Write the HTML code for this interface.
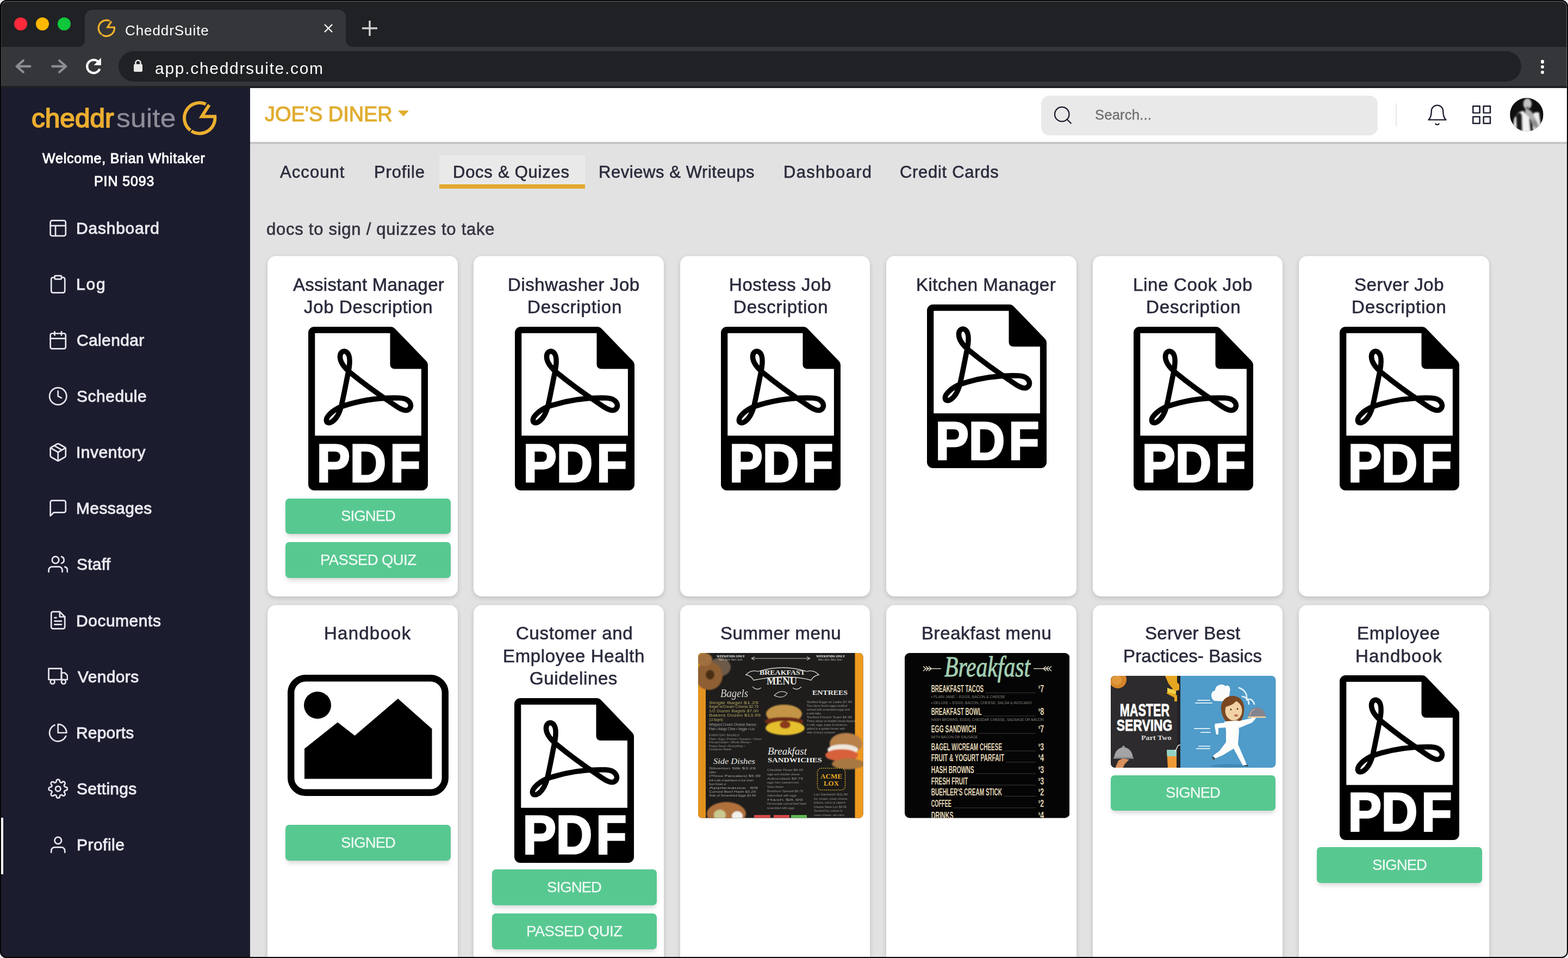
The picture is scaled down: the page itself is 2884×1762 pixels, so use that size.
<!DOCTYPE html>
<html lang="en"><head><meta charset="utf-8"><title>CheddrSuite</title>
<style>
*{margin:0;padding:0;box-sizing:border-box}
html,body{width:2884px;height:1762px;background:#ebebeb}
body{font-family:"Liberation Sans",sans-serif;position:relative}
#win{position:absolute;left:0;top:0;width:2884px;height:1762px;border-radius:12px;overflow:hidden;background:#e2e2e3}
#win div,#win svg,#win span{position:absolute;display:block}
.t{white-space:nowrap;will-change:transform}
#frame{position:absolute;left:0;top:0;width:2884px;height:1762px;border:2px solid #050505;border-radius:12px;pointer-events:none}
#hl{position:absolute;left:2px;top:2px;width:2880px;height:158px;border:1.6px solid rgba(255,255,255,0.34);border-bottom:none;border-left-color:rgba(255,255,255,0.12);border-radius:10px 10px 0 0;pointer-events:none}
</style></head>
<body><div id="win">
<main>
<div style="left:459.5px;top:162px;width:2425px;height:1600px;background:#e2e2e3"></div>
<section>
<article>
<div style="left:492px;top:471.3px;width:349.5px;height:625.5px;background:#fff;border-radius:15px;box-shadow:0 3px 9px rgba(0,0,0,0.16)"></div>
<span class="t" style="left:538.5px;top:503.9px;font-size:33px;line-height:40px;color:#2a2b3c;letter-spacing:0.28px;-webkit-text-stroke:0.6px #2a2b3c;">Assistant Manager</span>
<span class="t" style="left:558.7px;top:545.0px;font-size:33px;line-height:40px;color:#2a2b3c;letter-spacing:0.66px;-webkit-text-stroke:0.6px #2a2b3c;">Job Description</span>
<svg style="left:567.2px;top:600.9px" width="220" height="301" viewBox="0 0 220 301" preserveAspectRatio="none"><path d="M11,0 H152 Q156,0 159,3 L217,63 Q220,66 220,70 V290 a11,11 0 0 1 -11,11 H11 a11,11 0 0 1 -11,-11 V11 a11,11 0 0 1 11,-11 Z" fill="#000"/><path d="M12.3,11.8 H150.5 V69.5 a8,8 0 0 0 8,8 H207.9 V200.3 H12.3 Z" fill="#fff"/><path d="M60.5,147 C65,128 69,106 73.5,84 C76,72 78.5,55 72,48 C66,41.5 58,46 58.5,56 C59,66 67,76 78,85 C100,103 126,122 150,138 C164,148 178,158.5 185.5,151.5 C193,144 186,131.5 168,131 C135,130 98,134 60.5,147 C46,153 32,165 33.5,173 C35,181 52,177 60.5,147 Z" fill="none" stroke="#000" stroke-width="9.6" stroke-linejoin="round"/><text transform="scale(0.93,1)" x="16.6 82.6 161.5" y="284.6" font-family="Liberation Sans, sans-serif" font-weight="700" font-size="99" fill="#fff" stroke="#fff" stroke-width="3.2" stroke-linejoin="miter">PDF</text></svg>
<div style="left:525.4px;top:916.6px;width:303.4px;height:65.6px;background:#58c891;border-radius:7px;box-shadow:0 6px 9px -2px rgba(0,0,0,0.17)"></div>
<span class="t" style="left:626.7px;top:932.2px;font-size:27.5px;line-height:33px;color:#f0faf5;letter-spacing:-0.89px;-webkit-text-stroke:0.25px #f0faf5;">SIGNED</span>
<div style="left:525.4px;top:997.4px;width:303.4px;height:65.6px;background:#58c891;border-radius:7px;box-shadow:0 6px 9px -2px rgba(0,0,0,0.17)"></div>
<span class="t" style="left:588.7px;top:1013.0px;font-size:27.5px;line-height:33px;color:#f0faf5;letter-spacing:-0.59px;-webkit-text-stroke:0.25px #f0faf5;">PASSED QUIZ</span>
</article>
<article>
<div style="left:871.4px;top:471.3px;width:349.5px;height:625.5px;background:#fff;border-radius:15px;box-shadow:0 3px 9px rgba(0,0,0,0.16)"></div>
<span class="t" style="left:934.3px;top:503.9px;font-size:33px;line-height:40px;color:#2a2b3c;letter-spacing:0.57px;-webkit-text-stroke:0.6px #2a2b3c;">Dishwasher Job</span>
<span class="t" style="left:969.5px;top:545.0px;font-size:33px;line-height:40px;color:#2a2b3c;letter-spacing:0.83px;-webkit-text-stroke:0.6px #2a2b3c;">Description</span>
<svg style="left:946.6px;top:600.9px" width="220" height="301" viewBox="0 0 220 301" preserveAspectRatio="none"><path d="M11,0 H152 Q156,0 159,3 L217,63 Q220,66 220,70 V290 a11,11 0 0 1 -11,11 H11 a11,11 0 0 1 -11,-11 V11 a11,11 0 0 1 11,-11 Z" fill="#000"/><path d="M12.3,11.8 H150.5 V69.5 a8,8 0 0 0 8,8 H207.9 V200.3 H12.3 Z" fill="#fff"/><path d="M60.5,147 C65,128 69,106 73.5,84 C76,72 78.5,55 72,48 C66,41.5 58,46 58.5,56 C59,66 67,76 78,85 C100,103 126,122 150,138 C164,148 178,158.5 185.5,151.5 C193,144 186,131.5 168,131 C135,130 98,134 60.5,147 C46,153 32,165 33.5,173 C35,181 52,177 60.5,147 Z" fill="none" stroke="#000" stroke-width="9.6" stroke-linejoin="round"/><text transform="scale(0.93,1)" x="16.6 82.6 161.5" y="284.6" font-family="Liberation Sans, sans-serif" font-weight="700" font-size="99" fill="#fff" stroke="#fff" stroke-width="3.2" stroke-linejoin="miter">PDF</text></svg>
</article>
<article>
<div style="left:1250.8px;top:471.3px;width:349.5px;height:625.5px;background:#fff;border-radius:15px;box-shadow:0 3px 9px rgba(0,0,0,0.16)"></div>
<span class="t" style="left:1340.9px;top:503.9px;font-size:33px;line-height:40px;color:#2a2b3c;letter-spacing:0.59px;-webkit-text-stroke:0.6px #2a2b3c;">Hostess Job</span>
<span class="t" style="left:1348.5px;top:545.0px;font-size:33px;line-height:40px;color:#2a2b3c;letter-spacing:0.86px;-webkit-text-stroke:0.6px #2a2b3c;">Description</span>
<svg style="left:1326px;top:600.9px" width="220" height="301" viewBox="0 0 220 301" preserveAspectRatio="none"><path d="M11,0 H152 Q156,0 159,3 L217,63 Q220,66 220,70 V290 a11,11 0 0 1 -11,11 H11 a11,11 0 0 1 -11,-11 V11 a11,11 0 0 1 11,-11 Z" fill="#000"/><path d="M12.3,11.8 H150.5 V69.5 a8,8 0 0 0 8,8 H207.9 V200.3 H12.3 Z" fill="#fff"/><path d="M60.5,147 C65,128 69,106 73.5,84 C76,72 78.5,55 72,48 C66,41.5 58,46 58.5,56 C59,66 67,76 78,85 C100,103 126,122 150,138 C164,148 178,158.5 185.5,151.5 C193,144 186,131.5 168,131 C135,130 98,134 60.5,147 C46,153 32,165 33.5,173 C35,181 52,177 60.5,147 Z" fill="none" stroke="#000" stroke-width="9.6" stroke-linejoin="round"/><text transform="scale(0.93,1)" x="16.6 82.6 161.5" y="284.6" font-family="Liberation Sans, sans-serif" font-weight="700" font-size="99" fill="#fff" stroke="#fff" stroke-width="3.2" stroke-linejoin="miter">PDF</text></svg>
</article>
<article>
<div style="left:1630.2px;top:471.3px;width:349.5px;height:625.5px;background:#fff;border-radius:15px;box-shadow:0 3px 9px rgba(0,0,0,0.16)"></div>
<span class="t" style="left:1685.3px;top:503.9px;font-size:33px;line-height:40px;color:#2a2b3c;letter-spacing:0.51px;-webkit-text-stroke:0.6px #2a2b3c;">Kitchen Manager</span>
<svg style="left:1705.4px;top:559.8px" width="220" height="301" viewBox="0 0 220 301" preserveAspectRatio="none"><path d="M11,0 H152 Q156,0 159,3 L217,63 Q220,66 220,70 V290 a11,11 0 0 1 -11,11 H11 a11,11 0 0 1 -11,-11 V11 a11,11 0 0 1 11,-11 Z" fill="#000"/><path d="M12.3,11.8 H150.5 V69.5 a8,8 0 0 0 8,8 H207.9 V200.3 H12.3 Z" fill="#fff"/><path d="M60.5,147 C65,128 69,106 73.5,84 C76,72 78.5,55 72,48 C66,41.5 58,46 58.5,56 C59,66 67,76 78,85 C100,103 126,122 150,138 C164,148 178,158.5 185.5,151.5 C193,144 186,131.5 168,131 C135,130 98,134 60.5,147 C46,153 32,165 33.5,173 C35,181 52,177 60.5,147 Z" fill="none" stroke="#000" stroke-width="9.6" stroke-linejoin="round"/><text transform="scale(0.93,1)" x="16.6 82.6 161.5" y="284.6" font-family="Liberation Sans, sans-serif" font-weight="700" font-size="99" fill="#fff" stroke="#fff" stroke-width="3.2" stroke-linejoin="miter">PDF</text></svg>
</article>
<article>
<div style="left:2009.6px;top:471.3px;width:349.5px;height:625.5px;background:#fff;border-radius:15px;box-shadow:0 3px 9px rgba(0,0,0,0.16)"></div>
<span class="t" style="left:2083.6px;top:503.9px;font-size:33px;line-height:40px;color:#2a2b3c;letter-spacing:0.70px;-webkit-text-stroke:0.6px #2a2b3c;">Line Cook Job</span>
<span class="t" style="left:2107.5px;top:545.0px;font-size:33px;line-height:40px;color:#2a2b3c;letter-spacing:0.85px;-webkit-text-stroke:0.6px #2a2b3c;">Description</span>
<svg style="left:2084.8px;top:600.9px" width="220" height="301" viewBox="0 0 220 301" preserveAspectRatio="none"><path d="M11,0 H152 Q156,0 159,3 L217,63 Q220,66 220,70 V290 a11,11 0 0 1 -11,11 H11 a11,11 0 0 1 -11,-11 V11 a11,11 0 0 1 11,-11 Z" fill="#000"/><path d="M12.3,11.8 H150.5 V69.5 a8,8 0 0 0 8,8 H207.9 V200.3 H12.3 Z" fill="#fff"/><path d="M60.5,147 C65,128 69,106 73.5,84 C76,72 78.5,55 72,48 C66,41.5 58,46 58.5,56 C59,66 67,76 78,85 C100,103 126,122 150,138 C164,148 178,158.5 185.5,151.5 C193,144 186,131.5 168,131 C135,130 98,134 60.5,147 C46,153 32,165 33.5,173 C35,181 52,177 60.5,147 Z" fill="none" stroke="#000" stroke-width="9.6" stroke-linejoin="round"/><text transform="scale(0.93,1)" x="16.6 82.6 161.5" y="284.6" font-family="Liberation Sans, sans-serif" font-weight="700" font-size="99" fill="#fff" stroke="#fff" stroke-width="3.2" stroke-linejoin="miter">PDF</text></svg>
</article>
<article>
<div style="left:2389px;top:471.3px;width:349.5px;height:625.5px;background:#fff;border-radius:15px;box-shadow:0 3px 9px rgba(0,0,0,0.16)"></div>
<span class="t" style="left:2490.6px;top:503.9px;font-size:33px;line-height:40px;color:#2a2b3c;letter-spacing:0.56px;-webkit-text-stroke:0.6px #2a2b3c;">Server Job</span>
<span class="t" style="left:2486.1px;top:545.0px;font-size:33px;line-height:40px;color:#2a2b3c;letter-spacing:0.88px;-webkit-text-stroke:0.6px #2a2b3c;">Description</span>
<svg style="left:2464.2px;top:600.9px" width="220" height="301" viewBox="0 0 220 301" preserveAspectRatio="none"><path d="M11,0 H152 Q156,0 159,3 L217,63 Q220,66 220,70 V290 a11,11 0 0 1 -11,11 H11 a11,11 0 0 1 -11,-11 V11 a11,11 0 0 1 11,-11 Z" fill="#000"/><path d="M12.3,11.8 H150.5 V69.5 a8,8 0 0 0 8,8 H207.9 V200.3 H12.3 Z" fill="#fff"/><path d="M60.5,147 C65,128 69,106 73.5,84 C76,72 78.5,55 72,48 C66,41.5 58,46 58.5,56 C59,66 67,76 78,85 C100,103 126,122 150,138 C164,148 178,158.5 185.5,151.5 C193,144 186,131.5 168,131 C135,130 98,134 60.5,147 C46,153 32,165 33.5,173 C35,181 52,177 60.5,147 Z" fill="none" stroke="#000" stroke-width="9.6" stroke-linejoin="round"/><text transform="scale(0.93,1)" x="16.6 82.6 161.5" y="284.6" font-family="Liberation Sans, sans-serif" font-weight="700" font-size="99" fill="#fff" stroke="#fff" stroke-width="3.2" stroke-linejoin="miter">PDF</text></svg>
</article>
<article>
<div style="left:492px;top:1112.8px;width:349.5px;height:680px;background:#fff;border-radius:15px;box-shadow:0 3px 9px rgba(0,0,0,0.16)"></div>
<span class="t" style="left:595.8px;top:1145.4px;font-size:33px;line-height:40px;color:#2a2b3c;letter-spacing:1.24px;-webkit-text-stroke:0.6px #2a2b3c;">Handbook</span>
<svg style="left:529.2px;top:1241.4px;" width="296" height="223" viewBox="0 0 296 223"><rect x="6.2" y="6.2" width="283.6" height="210.6" rx="27" ry="27" fill="#fff" stroke="#000" stroke-width="12.4"/><circle cx="55" cy="56" r="25" fill="#000"/><polygon points="31,136 92,87.5 123.5,112 203,44 265.5,99.5 265.5,191.5 31,191.5" fill="#000"/></svg>
<div style="left:525.4px;top:1517px;width:303.4px;height:65.6px;background:#58c891;border-radius:7px;box-shadow:0 6px 9px -2px rgba(0,0,0,0.17)"></div>
<span class="t" style="left:626.7px;top:1532.6px;font-size:27.5px;line-height:33px;color:#f0faf5;letter-spacing:-0.89px;-webkit-text-stroke:0.25px #f0faf5;">SIGNED</span>
</article>
<article>
<div style="left:871.4px;top:1112.8px;width:349.5px;height:680px;background:#fff;border-radius:15px;box-shadow:0 3px 9px rgba(0,0,0,0.16)"></div>
<span class="t" style="left:948.9px;top:1145.4px;font-size:33px;line-height:40px;color:#2a2b3c;letter-spacing:0.66px;-webkit-text-stroke:0.6px #2a2b3c;">Customer and</span>
<span class="t" style="left:925.3px;top:1186.5px;font-size:33px;line-height:40px;color:#2a2b3c;letter-spacing:0.65px;-webkit-text-stroke:0.6px #2a2b3c;">Employee Health</span>
<span class="t" style="left:974.4px;top:1227.6px;font-size:33px;line-height:40px;color:#2a2b3c;letter-spacing:0.60px;-webkit-text-stroke:0.6px #2a2b3c;">Guidelines</span>
<svg style="left:946.2px;top:1283.5px" width="220" height="303" viewBox="0 0 220 301" preserveAspectRatio="none"><path d="M11,0 H152 Q156,0 159,3 L217,63 Q220,66 220,70 V290 a11,11 0 0 1 -11,11 H11 a11,11 0 0 1 -11,-11 V11 a11,11 0 0 1 11,-11 Z" fill="#000"/><path d="M12.3,11.8 H150.5 V69.5 a8,8 0 0 0 8,8 H207.9 V200.3 H12.3 Z" fill="#fff"/><path d="M60.5,147 C65,128 69,106 73.5,84 C76,72 78.5,55 72,48 C66,41.5 58,46 58.5,56 C59,66 67,76 78,85 C100,103 126,122 150,138 C164,148 178,158.5 185.5,151.5 C193,144 186,131.5 168,131 C135,130 98,134 60.5,147 C46,153 32,165 33.5,173 C35,181 52,177 60.5,147 Z" fill="none" stroke="#000" stroke-width="9.6" stroke-linejoin="round"/><text transform="scale(0.93,1)" x="16.6 82.6 161.5" y="284.6" font-family="Liberation Sans, sans-serif" font-weight="700" font-size="99" fill="#fff" stroke="#fff" stroke-width="3.2" stroke-linejoin="miter">PDF</text></svg>
<div style="left:904.8px;top:1599.2px;width:303.4px;height:65.6px;background:#58c891;border-radius:7px;box-shadow:0 6px 9px -2px rgba(0,0,0,0.17)"></div>
<span class="t" style="left:1006.1px;top:1614.8px;font-size:27.5px;line-height:33px;color:#f0faf5;letter-spacing:-0.89px;-webkit-text-stroke:0.25px #f0faf5;">SIGNED</span>
<div style="left:904.8px;top:1680px;width:303.4px;height:65.6px;background:#58c891;border-radius:7px;box-shadow:0 6px 9px -2px rgba(0,0,0,0.17)"></div>
<span class="t" style="left:968.1px;top:1695.6px;font-size:27.5px;line-height:33px;color:#f0faf5;letter-spacing:-0.59px;-webkit-text-stroke:0.25px #f0faf5;">PASSED QUIZ</span>
</article>
<article>
<div style="left:1250.8px;top:1112.8px;width:349.5px;height:680px;background:#fff;border-radius:15px;box-shadow:0 3px 9px rgba(0,0,0,0.16)"></div>
<span class="t" style="left:1324.7px;top:1145.4px;font-size:33px;line-height:40px;color:#2a2b3c;letter-spacing:0.53px;-webkit-text-stroke:0.6px #2a2b3c;">Summer menu</span>
<svg style="left:1284.25px;top:1201.4px;" width="303.5" height="303.5" viewBox="0 0 303.5 303.5"><defs><clipPath id="cs"><rect width="303.5" height="303.5" rx="7"/></clipPath></defs><g clip-path="url(#cs)"><defs><filter id="sumf" x="-10%" y="-10%" width="120%" height="120%"><feGaussianBlur stdDeviation="1.1"/></filter></defs><rect width="304" height="304" fill="#1e1d1c"/><rect x="0" y="0" width="14" height="304" fill="#e3921f"/><rect x="288.5" y="0" width="15.5" height="304" fill="#ee991f"/><g filter="url(#sumf)"><ellipse cx="40" cy="26" rx="20" ry="17" fill="#6e5a48"/><ellipse cx="20" cy="42" rx="25" ry="26" fill="#8e5e30"/><ellipse cx="22" cy="40" rx="8" ry="9" fill="#4a2e18"/><ellipse cx="12" cy="12" rx="14" ry="12" fill="#a07040"/><ellipse cx="158" cy="112" rx="33" ry="17" fill="#c49446"/><ellipse cx="158" cy="126" rx="36" ry="8" fill="#6e2a18"/><ellipse cx="160" cy="138" rx="36" ry="13" fill="#e6bf2e"/><ellipse cx="160" cy="132" rx="10" ry="7" fill="#8a3a1c"/><ellipse cx="272" cy="167" rx="30" ry="20" fill="#b8814a"/><ellipse cx="266" cy="178" rx="28" ry="10" fill="#efe6dc"/><ellipse cx="264" cy="188" rx="30" ry="11" fill="#d8603a"/><ellipse cx="276" cy="204" rx="30" ry="10" fill="#a87842"/><ellipse cx="52" cy="296" rx="36" ry="22" fill="#b0703a"/><ellipse cx="40" cy="298" rx="11" ry="10" fill="#c8c890"/><ellipse cx="72" cy="300" rx="10" ry="9" fill="#f2f0ea"/></g><rect x="103" y="298" width="30" height="6" fill="#d44a4a"/><rect x="139" y="298" width="29" height="6" fill="#d44a4a"/><rect x="171" y="298" width="29" height="6" fill="#5fb854"/><path d="M88,40 q10,-10 22,-6 q46,-14 90,0 q12,-4 22,6 q-10,2 -14,10 q-44,-12 -106,0 q-4,-8 -14,-10 Z" fill="none" stroke="#d8d8d4" stroke-width="1.3"/><path d="M100,62 q8,8 16,2 M190,62 q-8,8 -16,2 M140,78 q12,-12 24,-4 q-8,12 -24,4 Z" fill="none" stroke="#cfcfcb" stroke-width="1.2"/><path d="M98,10 H206 M98,10 l6,-3 M98,10 l6,3 M206,10 l-6,-3 M206,10 l-6,3" stroke="#bdbdb8" stroke-width="1.2" fill="none"/><rect x="219.5" y="212" width="51" height="40" rx="7" fill="#1a1a18" stroke="#c9a030" stroke-width="1.6" stroke-dasharray="2 1.6"/><g font-family="Liberation Serif, serif" fill="#ecece8" font-weight="700"><text x="113" y="40" font-size="13" textLength="84" lengthAdjust="spacingAndGlyphs">BREAKFAST</text><text x="126" y="58" font-size="18" textLength="56" lengthAdjust="spacingAndGlyphs">MENU</text><text x="210" y="77" font-size="12.5" textLength="65" lengthAdjust="spacingAndGlyphs">ENTREES</text><text x="41" y="81" font-size="20" font-style="italic" font-weight="400" textLength="51" lengthAdjust="spacingAndGlyphs" opacity="0.9">Bagels</text><text x="128" y="187" font-size="19" font-style="italic" font-weight="400" textLength="72" lengthAdjust="spacingAndGlyphs">Breakfast</text><text x="128" y="200.5" font-size="12" textLength="100" lengthAdjust="spacingAndGlyphs">SANDWICHES</text><text x="28" y="204" font-size="15" font-style="italic" font-weight="400" textLength="77" lengthAdjust="spacingAndGlyphs">Side Dishes</text><text x="225" y="231" font-size="11.5" fill="#e6ad24" textLength="40" lengthAdjust="spacingAndGlyphs">ACME</text><text x="231" y="244" font-size="11.5" fill="#e6ad24" textLength="28" lengthAdjust="spacingAndGlyphs">LOX</text><text x="34" y="8" font-size="6" textLength="52" lengthAdjust="spacingAndGlyphs">WEEKENDS ONLY</text><text x="217" y="8" font-size="6" textLength="53" lengthAdjust="spacingAndGlyphs">WEEKENDS ONLY</text></g><g xml:space="preserve" font-family="Liberation Sans, sans-serif" font-size="4.6" font-weight="400" fill="#cfcfca" opacity="0.8"><text x="38" y="13.5" textLength="44" lengthAdjust="spacingAndGlyphs">8am-2pm  9am-1pm</text></g><g xml:space="preserve" font-family="Liberation Sans, sans-serif" font-size="4.6" font-weight="400" fill="#cfcfca" opacity="0.8"><text x="221" y="13.5" textLength="44" lengthAdjust="spacingAndGlyphs">8am-2pm  9am-1pm</text></g><g xml:space="preserve" font-family="Liberation Sans, sans-serif" font-size="6.4" font-weight="400" fill="#d9c96e" opacity="0.78"><text x="20" y="93.5" textLength="91" lengthAdjust="spacingAndGlyphs">Single Bagel               $1.25</text><text x="20" y="101.3" textLength="91" lengthAdjust="spacingAndGlyphs">Bagel w/Cream Cheese  $2.75</text><text x="20" y="109.1" textLength="91" lengthAdjust="spacingAndGlyphs">1/2 Dozen Bagels        $7.00</text><text x="20" y="116.9" textLength="95" lengthAdjust="spacingAndGlyphs">Bakers Dozen              $13.99</text><text x="20" y="124.7" textLength="26" lengthAdjust="spacingAndGlyphs">(13 Bagels)</text></g><g xml:space="preserve" font-family="Liberation Sans, sans-serif" font-size="6.4" font-weight="400" fill="#d8d8d4" opacity="0.7"><text x="20" y="133.5" textLength="88" lengthAdjust="spacingAndGlyphs">Whipped Cream Cheese flavors:</text><text x="20" y="141.7" textLength="84" lengthAdjust="spacingAndGlyphs">Plain • Asiago Chive • Veggie • Lox</text></g><g xml:space="preserve" font-family="Liberation Sans, sans-serif" font-size="6.2" font-weight="400" fill="#cfcfca" opacity="0.62"><text x="20" y="153" textLength="56" lengthAdjust="spacingAndGlyphs">EVERYDAY BAGELS</text><text x="20" y="159.5" textLength="97" lengthAdjust="spacingAndGlyphs">Plain • Egg • Pretzel • Sesame • Onion</text><text x="20" y="166" textLength="78" lengthAdjust="spacingAndGlyphs">Pumpernickel • Whole Wheat •</text><text x="20" y="172.5" textLength="66" lengthAdjust="spacingAndGlyphs">Poppy Seed • Everything •</text><text x="20" y="179" textLength="42" lengthAdjust="spacingAndGlyphs">Cinnamon Raisin</text></g><g xml:space="preserve" font-family="Liberation Sans, sans-serif" font-size="6.2" font-weight="400" fill="#d4d4d0" opacity="0.62"><text x="200" y="91.5" textLength="83" lengthAdjust="spacingAndGlyphs">Stuffed Eggs w/ Latke    $7.99</text><text x="200" y="98.5" textLength="74" lengthAdjust="spacingAndGlyphs">Two farm fresh eggs stuffed</text><text x="200" y="105.5" textLength="79" lengthAdjust="spacingAndGlyphs">served with scrambled eggs and</text><text x="200" y="112.5" textLength="26" lengthAdjust="spacingAndGlyphs">a side latke</text><text x="200" y="119.5" textLength="83" lengthAdjust="spacingAndGlyphs">Stuffed French Toast     $6.99</text><text x="200" y="126.5" textLength="89" lengthAdjust="spacingAndGlyphs">Three slices of challah bread dipped</text><text x="200" y="133.5" textLength="75" lengthAdjust="spacingAndGlyphs">in milk, eggs, sugar &amp; cinnamon,</text><text x="200" y="140.5" textLength="70" lengthAdjust="spacingAndGlyphs">grilled to a golden brown with</text><text x="200" y="147.5" textLength="52" lengthAdjust="spacingAndGlyphs">side of berry compote</text></g><g xml:space="preserve" font-family="Liberation Sans, sans-serif" font-size="6.2" font-weight="400" fill="#d8d8d4" opacity="0.7"><text x="20" y="214" textLength="86" lengthAdjust="spacingAndGlyphs">Silverton Silk            $3.29</text><text x="20" y="221.2" textLength="13" lengthAdjust="spacingAndGlyphs">Latkes</text><text x="20" y="228.4" textLength="95" lengthAdjust="spacingAndGlyphs">(Three Pancakes)      $5.99</text><text x="20" y="235.6" textLength="82" lengthAdjust="spacingAndGlyphs">with a side of applesauce or sour cream</text><text x="20" y="242.8" textLength="32" lengthAdjust="spacingAndGlyphs">Sour Cream or</text><text x="20" y="250" textLength="90" lengthAdjust="spacingAndGlyphs">Applesauce                 .69</text><text x="20" y="257.2" textLength="86" lengthAdjust="spacingAndGlyphs">Corned Beef Hash     $3.29</text><text x="20" y="264.4" textLength="86" lengthAdjust="spacingAndGlyphs">Side of Scrambled Eggs $3.99</text></g><g xml:space="preserve" font-family="Liberation Sans, sans-serif" font-size="6.2" font-weight="400" fill="#d4d4d0" opacity="0.62"><text x="127" y="217" textLength="66" lengthAdjust="spacingAndGlyphs">Cheddar Head       $8.49</text><text x="127" y="224.8" textLength="60" lengthAdjust="spacingAndGlyphs">eggs and cheddar cheese</text><text x="127" y="232.6" textLength="66" lengthAdjust="spacingAndGlyphs">Adirondack           $8.79</text><text x="127" y="240.4" textLength="58" lengthAdjust="spacingAndGlyphs">eggs, ham, pastrami and</text><text x="127" y="248.2" textLength="30" lengthAdjust="spacingAndGlyphs">Swiss cheese</text><text x="127" y="256" textLength="66" lengthAdjust="spacingAndGlyphs">Buckhorn Special    $9.79</text><text x="127" y="263.8" textLength="54" lengthAdjust="spacingAndGlyphs">Adirondack with eggs</text><text x="127" y="271.6" textLength="66" lengthAdjust="spacingAndGlyphs">Hash                    $8.99</text><text x="127" y="279.4" textLength="72" lengthAdjust="spacingAndGlyphs">Homemade corned beef hash</text><text x="127" y="287.2" textLength="50" lengthAdjust="spacingAndGlyphs">scrambled with eggs</text></g><g xml:space="preserve" font-family="Liberation Sans, sans-serif" font-size="6.2" font-weight="400" fill="#d4d4d0" opacity="0.62"><text x="213" y="262" textLength="62" lengthAdjust="spacingAndGlyphs">Lox Sandwich   $11.99</text><text x="213" y="269.6" textLength="63" lengthAdjust="spacingAndGlyphs">lox, tomato, cream cheese,</text><text x="213" y="277.2" textLength="58" lengthAdjust="spacingAndGlyphs">lettuce, onion &amp; capers</text><text x="213" y="284.8" textLength="60" lengthAdjust="spacingAndGlyphs">Classic Meat Lox  $9.99</text><text x="213" y="292.4" textLength="52" lengthAdjust="spacingAndGlyphs">Smoked lox, onions &amp;</text><text x="213" y="300" textLength="56" lengthAdjust="spacingAndGlyphs">cream cheese, red onion</text></g></g></svg>
</article>
<article>
<div style="left:1630.2px;top:1112.8px;width:349.5px;height:680px;background:#fff;border-radius:15px;box-shadow:0 3px 9px rgba(0,0,0,0.16)"></div>
<span class="t" style="left:1695.3px;top:1145.4px;font-size:33px;line-height:40px;color:#2a2b3c;letter-spacing:0.60px;-webkit-text-stroke:0.6px #2a2b3c;">Breakfast menu</span>
<svg style="left:1663.65px;top:1201.4px;" width="303.5" height="303.5" viewBox="0 0 303.5 303.5"><defs><clipPath id="cb"><rect width="303.5" height="303.5" rx="9"/></clipPath></defs><g clip-path="url(#cb)"><rect width="304" height="304" fill="#050505"/><text x="73" y="43" font-family="Liberation Serif, serif" font-style="italic" font-weight="400" font-size="52" fill="#a3cfb3" stroke="#a3cfb3" stroke-width="0.9" textLength="158" lengthAdjust="spacingAndGlyphs">Breakfast</text><path d="M40,28.8 H67 M237,28.8 H264 M34,24.5 l5,4.3 l-5,4.3 M39,24.5 l5,4.3 l-5,4.3 M44,24.5 l5,4.3 l-5,4.3 M270,24.5 l-5,4.3 l5,4.3 M265,24.5 l-5,4.3 l5,4.3 M260,24.5 l-5,4.3 l5,4.3" stroke="#d6d0be" stroke-width="1.6" fill="none"/><g font-family="Liberation Sans, sans-serif" font-weight="700" font-size="17.6" fill="#e2d6b6"><text x="48.7" y="71.7" textLength="96.4" lengthAdjust="spacingAndGlyphs">BREAKFAST TACOS</text><text x="246" y="71.7" font-size="17.6" textLength="10" lengthAdjust="spacingAndGlyphs"><tspan font-size="8" dy="-7">$</tspan><tspan dy="7">7</tspan></text><rect x="148.1" y="72.7" width="92.9" height="1" fill="#3c3c3c"/><text x="48.7" y="114.4" textLength="92.7" lengthAdjust="spacingAndGlyphs">BREAKFAST BOWL</text><text x="246" y="114.4" font-size="17.6" textLength="10" lengthAdjust="spacingAndGlyphs"><tspan font-size="8" dy="-7">$</tspan><tspan dy="7">8</tspan></text><rect x="144.4" y="115.4" width="96.6" height="1" fill="#3c3c3c"/><text x="48.7" y="146.4" textLength="82.7" lengthAdjust="spacingAndGlyphs">EGG SANDWICH</text><text x="246" y="146.4" font-size="17.6" textLength="10" lengthAdjust="spacingAndGlyphs"><tspan font-size="8" dy="-7">$</tspan><tspan dy="7">7</tspan></text><rect x="134.4" y="147.4" width="106.6" height="1" fill="#3c3c3c"/><text x="48.7" y="178.7" textLength="130.4" lengthAdjust="spacingAndGlyphs">BAGEL W/CREAM CHEESE</text><text x="246" y="178.7" font-size="17.6" textLength="10" lengthAdjust="spacingAndGlyphs"><tspan font-size="8" dy="-7">$</tspan><tspan dy="7">3</tspan></text><rect x="182.1" y="179.7" width="58.9" height="1" fill="#3c3c3c"/><text x="48.7" y="199.3" textLength="134.3" lengthAdjust="spacingAndGlyphs">FRUIT &amp; YOGURT PARFAIT</text><text x="246" y="199.3" font-size="17.6" textLength="10" lengthAdjust="spacingAndGlyphs"><tspan font-size="8" dy="-7">$</tspan><tspan dy="7">4</tspan></text><rect x="186" y="200.3" width="55" height="1" fill="#3c3c3c"/><text x="48.7" y="220.5" textLength="79" lengthAdjust="spacingAndGlyphs">HASH BROWNS</text><text x="246" y="220.5" font-size="17.6" textLength="10" lengthAdjust="spacingAndGlyphs"><tspan font-size="8" dy="-7">$</tspan><tspan dy="7">3</tspan></text><rect x="130.7" y="221.5" width="110.3" height="1" fill="#3c3c3c"/><text x="48.7" y="241.5" textLength="67.6" lengthAdjust="spacingAndGlyphs">FRESH FRUIT</text><text x="246" y="241.5" font-size="17.6" textLength="10" lengthAdjust="spacingAndGlyphs"><tspan font-size="8" dy="-7">$</tspan><tspan dy="7">3</tspan></text><rect x="119.3" y="242.5" width="121.7" height="1" fill="#3c3c3c"/><text x="48.7" y="262" textLength="130.4" lengthAdjust="spacingAndGlyphs">BUEHLER&#x27;S CREAM STICK</text><text x="246" y="262" font-size="17.6" textLength="10" lengthAdjust="spacingAndGlyphs"><tspan font-size="8" dy="-7">$</tspan><tspan dy="7">2</tspan></text><rect x="182.1" y="263" width="58.9" height="1" fill="#3c3c3c"/><text x="48.7" y="283.3" textLength="37.3" lengthAdjust="spacingAndGlyphs">COFFEE</text><text x="246" y="283.3" font-size="17.6" textLength="10" lengthAdjust="spacingAndGlyphs"><tspan font-size="8" dy="-7">$</tspan><tspan dy="7">2</tspan></text><rect x="89" y="284.3" width="152" height="1" fill="#3c3c3c"/><text x="48.7" y="304.5" textLength="41" lengthAdjust="spacingAndGlyphs">DRINKS</text><text x="246" y="304.5" font-size="17.6" textLength="10" lengthAdjust="spacingAndGlyphs"><tspan font-size="8" dy="-7">$</tspan><tspan dy="7">4</tspan></text><rect x="92.7" y="305.5" width="148.3" height="1" fill="#3c3c3c"/></g><g xml:space="preserve" font-family="Liberation Sans, sans-serif" font-size="7.6" font-weight="400" fill="#9a978e" opacity="0.9"><text x="48.7" y="82.8" textLength="136" lengthAdjust="spacingAndGlyphs">• PLAIN JANE – EGGS, BACON &amp; CHEESE</text></g><g xml:space="preserve" font-family="Liberation Sans, sans-serif" font-size="7.6" font-weight="400" fill="#9a978e" opacity="0.9"><text x="48.7" y="93.6" textLength="185" lengthAdjust="spacingAndGlyphs">• DELUXE – EGGS, BACON, CHEESE, SALSA &amp; AVOCADO</text></g><g xml:space="preserve" font-family="Liberation Sans, sans-serif" font-size="7.6" font-weight="400" fill="#9a978e" opacity="0.9"><text x="48.7" y="125" textLength="207" lengthAdjust="spacingAndGlyphs">HASH BROWNS, EGGS, CHEDDAR CHEESE, SAUSAGE OR BACON</text></g><g xml:space="preserve" font-family="Liberation Sans, sans-serif" font-size="7.6" font-weight="400" fill="#9a978e" opacity="0.9"><text x="48.7" y="157" textLength="86" lengthAdjust="spacingAndGlyphs">WITH BACON OR SAUSAGE</text></g></g></svg>
</article>
<article>
<div style="left:2009.6px;top:1112.8px;width:349.5px;height:680px;background:#fff;border-radius:15px;box-shadow:0 3px 9px rgba(0,0,0,0.16)"></div>
<span class="t" style="left:2106.0px;top:1145.4px;font-size:33px;line-height:40px;color:#2a2b3c;letter-spacing:0.28px;-webkit-text-stroke:0.6px #2a2b3c;">Server Best</span>
<span class="t" style="left:2065.9px;top:1186.5px;font-size:33px;line-height:40px;color:#2a2b3c;letter-spacing:0.12px;-webkit-text-stroke:0.6px #2a2b3c;">Practices- Basics</span>
<svg style="left:2043.05px;top:1242.5px;" width="303.5" height="169" viewBox="0 0 303.5 169"><defs><clipPath id="cm"><rect width="303.5" height="169" rx="8"/></clipPath></defs><g clip-path="url(#cm)"><defs><filter id="cmf" x="-5%" y="-5%" width="110%" height="110%"><feGaussianBlur stdDeviation="0.7"/></filter></defs><rect width="304" height="170" fill="#4f9bc9"/><rect width="128" height="170" fill="#2d2b2d"/><rect x="122" width="6" height="170" fill="#232224"/><g filter="url(#cmf)"><circle cx="13" cy="7" r="16" fill="#d6852c"/><circle cx="11" cy="8" r="9" fill="#e09a3c"/><path d="M100,0 H122 V12 L126,16 V26 L112,30 L122,36 V47 H117 V40 L102,32 L114,24 L106,14 Z" fill="#e6a624"/><path d="M104,22 L120,28 V34 L104,30 Z" fill="#f2d24a"/><path d="M6.5,150.5 a17,19 0 0 1 34,0 Z" fill="#a4a4a6"/><rect x="5" y="149.5" width="37" height="3" fill="#8a8a8c"/><circle cx="23.5" cy="130.5" r="2" fill="#a4a4a6"/><path d="M8,170 L14,156 L22,152 L34,154 L26,162 L22,170 Z" fill="#d8905c"/><path d="M103,136 H121 V170 H105 Z" fill="#f09a34"/><path d="M103,136 H121 V148 H103.6 Z" fill="#93d2c4"/><path d="M118,140 L124,128 L128,127" stroke="#e8e8e8" stroke-width="1.6" fill="none"/><ellipse cx="220" cy="165.5" rx="35" ry="3" fill="#3f88b6"/><path d="M190,46 C182,40 184,28 192,27 C192,16 206,13 211,19 C217,15 221,22 219,30 C219,38 214,44 212,47 Z" fill="#fbfbfb"/><path d="M203,62 C202,44 214,36 226,37 C240,38 247,50 245,66 C244,76 240,84 236,86 L214,86 C208,80 204,72 203,62 Z" fill="#7a4620"/><ellipse cx="226" cy="64" rx="15.5" ry="18" fill="#f2d2a4"/><path d="M207,58 C210,46 222,42 232,44 C228,52 218,56 207,58 Z" fill="#7a4620"/><ellipse cx="230.5" cy="73" rx="3.4" ry="2.2" fill="#b8705a"/><circle cx="233" cy="61" r="1.4" fill="#3a2a20"/><circle cx="221" cy="62" r="1.4" fill="#3a2a20"/><path d="M209,84 L234,82 L236,100 L234,126 L247,156 L250,164 L243,165 L226,134 L206,146 L192,152 L188,147 L200,138 L212,122 L212,100 Z" fill="#fdfdfb"/><path d="M232,84 L258,78 L264,74 L267,78 L260,86 L236,96 Z" fill="#fdfdfb"/><path d="M212,86 L192,88 L191,92 L194,108 L198,108 L198,96 L212,95 Z" fill="#fdfdfb"/><path d="M252.5,75 a16,17 0 0 1 32,0 Z" fill="#84848e"/><path d="M256,73 a12,13 0 0 1 9,-12" stroke="#a8a8b2" stroke-width="2" fill="none"/><path d="M252,76 H285" stroke="#f2d2a4" stroke-width="2.4"/><path d="M186,148 l6,4 l-3,3 Z M244,164 l8,0 l0,3 Z" fill="#4a3a2a"/><path d="M236,22 q16,6 14,22 q10,-4 14,8 M242,38 q12,2 12,14" stroke="#e4f1f9" stroke-width="2.6" fill="none" stroke-linecap="round"/><path d="M160,45 h22 M156,50 h30 M154,97 h28 M166,104 h17 M162,129.5 h20 M158,134 h24" stroke="#d5e9f5" stroke-width="2.2" stroke-linecap="round"/></g><g font-family="Liberation Sans, sans-serif" font-weight="700" fill="#fff" stroke="#fff" stroke-width="0.8"><text x="16.7" y="74.3" font-size="31.5" textLength="91.5" lengthAdjust="spacingAndGlyphs">MASTER</text><text x="10.8" y="101.2" font-size="29" textLength="102.5" lengthAdjust="spacingAndGlyphs">SERVING</text></g><text x="56" y="117.5" font-family="Liberation Serif, serif" font-weight="700" font-size="12.5" fill="#dcdcdc" textLength="55.5" lengthAdjust="spacingAndGlyphs">Part Two</text></g></svg>
<div style="left:2043px;top:1425.6px;width:303.4px;height:65.6px;background:#58c891;border-radius:7px;box-shadow:0 6px 9px -2px rgba(0,0,0,0.17)"></div>
<span class="t" style="left:2144.3px;top:1441.2px;font-size:27.5px;line-height:33px;color:#f0faf5;letter-spacing:-0.89px;-webkit-text-stroke:0.25px #f0faf5;">SIGNED</span>
</article>
<article>
<div style="left:2389px;top:1112.8px;width:349.5px;height:680px;background:#fff;border-radius:15px;box-shadow:0 3px 9px rgba(0,0,0,0.16)"></div>
<span class="t" style="left:2496.2px;top:1145.4px;font-size:33px;line-height:40px;color:#2a2b3c;letter-spacing:0.81px;-webkit-text-stroke:0.6px #2a2b3c;">Employee</span>
<span class="t" style="left:2492.9px;top:1186.5px;font-size:33px;line-height:40px;color:#2a2b3c;letter-spacing:1.17px;-webkit-text-stroke:0.6px #2a2b3c;">Handbook</span>
<svg style="left:2463.8px;top:1242.4px" width="220" height="303" viewBox="0 0 220 301" preserveAspectRatio="none"><path d="M11,0 H152 Q156,0 159,3 L217,63 Q220,66 220,70 V290 a11,11 0 0 1 -11,11 H11 a11,11 0 0 1 -11,-11 V11 a11,11 0 0 1 11,-11 Z" fill="#000"/><path d="M12.3,11.8 H150.5 V69.5 a8,8 0 0 0 8,8 H207.9 V200.3 H12.3 Z" fill="#fff"/><path d="M60.5,147 C65,128 69,106 73.5,84 C76,72 78.5,55 72,48 C66,41.5 58,46 58.5,56 C59,66 67,76 78,85 C100,103 126,122 150,138 C164,148 178,158.5 185.5,151.5 C193,144 186,131.5 168,131 C135,130 98,134 60.5,147 C46,153 32,165 33.5,173 C35,181 52,177 60.5,147 Z" fill="none" stroke="#000" stroke-width="9.6" stroke-linejoin="round"/><text transform="scale(0.93,1)" x="16.6 82.6 161.5" y="284.6" font-family="Liberation Sans, sans-serif" font-weight="700" font-size="99" fill="#fff" stroke="#fff" stroke-width="3.2" stroke-linejoin="miter">PDF</text></svg>
<div style="left:2422.4px;top:1558.1px;width:303.4px;height:65.6px;background:#58c891;border-radius:7px;box-shadow:0 6px 9px -2px rgba(0,0,0,0.17)"></div>
<span class="t" style="left:2523.7px;top:1573.7px;font-size:27.5px;line-height:33px;color:#f0faf5;letter-spacing:-0.89px;-webkit-text-stroke:0.25px #f0faf5;">SIGNED</span>
</article>
</section>
<nav>
<div style="left:808px;top:286px;width:267.7px;height:61.3px;background:#e9e9e9"></div>
<div style="left:808px;top:339.2px;width:267.7px;height:8.1px;background:#e2a92f"></div>
<span class="t" style="left:515.2px;top:298.1px;font-size:31px;line-height:37px;color:#2b2c3b;letter-spacing:1.07px;-webkit-text-stroke:0.6px #2b2c3b;">Account</span>
<span class="t" style="left:687.5px;top:298.1px;font-size:31px;line-height:37px;color:#2b2c3b;letter-spacing:0.86px;-webkit-text-stroke:0.6px #2b2c3b;">Profile</span>
<span class="t" style="left:833.2px;top:298.1px;font-size:31px;line-height:37px;color:#2b2c3b;letter-spacing:0.74px;-webkit-text-stroke:0.6px #2b2c3b;">Docs &amp; Quizes</span>
<span class="t" style="left:1101.1px;top:298.1px;font-size:31px;line-height:37px;color:#2b2c3b;letter-spacing:0.57px;-webkit-text-stroke:0.6px #2b2c3b;">Reviews &amp; Writeups</span>
<span class="t" style="left:1440.5px;top:298.1px;font-size:31px;line-height:37px;color:#2b2c3b;letter-spacing:1.30px;-webkit-text-stroke:0.6px #2b2c3b;">Dashboard</span>
<span class="t" style="left:1655.0px;top:298.1px;font-size:31px;line-height:37px;color:#2b2c3b;letter-spacing:0.70px;-webkit-text-stroke:0.6px #2b2c3b;">Credit Cards</span>
<span class="t" style="left:490.1px;top:403.1px;font-size:31px;line-height:37px;color:#33343f;letter-spacing:0.74px;-webkit-text-stroke:0.6px #33343f;">docs to sign / quizzes to take</span>
</nav>
</main>
<header>
<div style="left:459.5px;top:162px;width:2425px;height:99px;background:#fff"></div>
<div style="left:459.5px;top:261px;width:2425px;height:4px;background:#c6c6c7"></div>
<span class="t" style="left:486.5px;top:187.3px;font-size:38px;line-height:46px;color:#e0ad2f;letter-spacing:-0.05px;-webkit-text-stroke:1.1px #e0ad2f;">JOE'S DINER</span>
<svg style="left:732px;top:203px;" width="20" height="11" viewBox="0 0 20 11"><path d="M1.5,1 H18.5 L10,10 Z" fill="#e0ad2f" stroke="#e0ad2f" stroke-width="1.5" stroke-linejoin="round"/></svg>
<div style="left:1915px;top:176.2px;width:619px;height:72.4px;background:#e9e9e9;border-radius:15px"></div>
<svg style="left:1934.55px;top:191.85px;" width="39.7" height="39.7" viewBox="0 0 24 24"><g fill="none" stroke="#1b1c2e" stroke-width="1.4" stroke-linecap="round" stroke-linejoin="round"><circle cx="11" cy="11" r="8"/><line x1="21" y1="21" x2="16.65" y2="16.65"/></g></svg>
<span class="t" style="left:2013.7px;top:196.1px;font-size:25.5px;line-height:31px;color:#707072;letter-spacing:0.23px;-webkit-text-stroke:0.4px #707072;">Search...</span>
<div style="left:2566.6px;top:190px;width:2px;height:42px;background:#e8e8e8"></div>
<svg style="left:2621.5px;top:189.8px;" width="43" height="43" viewBox="0 0 24 24"><g fill="none" stroke="#1b1c2e" stroke-width="1.3" stroke-linecap="round" stroke-linejoin="round"><path d="M18 8A6 6 0 0 0 6 8c0 7-3 9-3 9h18s-3-2-3-9"/><path d="M13.73 21a2 2 0 0 1-3.46 0"/></g></svg>
<svg style="left:2704.35px;top:190.15px;" width="42.3" height="42.3" viewBox="0 0 24 24"><g fill="none" stroke="#1b1c2e" stroke-width="1.4" stroke-linecap="round" stroke-linejoin="round"><rect x="3" y="3" width="7" height="7"/><rect x="14" y="3" width="7" height="7"/><rect x="14" y="14" width="7" height="7"/><rect x="3" y="14" width="7" height="7"/></g></svg>
<svg style="left:2777.1px;top:180.3px;" width="61.8" height="61.6" viewBox="0 0 62 62"><defs><clipPath id="avc"><circle cx="31" cy="31" r="30.9"/></clipPath><filter id="avb" x="-10%" y="-10%" width="120%" height="120%"><feGaussianBlur stdDeviation="1.5"/></filter></defs><g clip-path="url(#avc)"><rect width="62" height="62" fill="#0f0f10"/><g filter="url(#avb)"><path d="M5,64 L8,38 L16,27 L24,24 L30,30 L37,37 L46,27 L54,27 L57,50 L52,64 Z" fill="#f1f1f1"/><path d="M11,33 L17,27 L22.5,28 L23.5,62 L12,60 Z" fill="#1c1c1e"/><path d="M20,27 L25,24 L23,32 Z" fill="#fafafa"/><path d="M35.5,39 L41,36 L44,62 L37.5,63 Z" fill="#1e1e20"/><ellipse cx="32.5" cy="11" rx="7.8" ry="10" fill="#c2c2c2"/><path d="M29,19 C33,22 40,22 43,30 L54,50 C54,55 50,58 46,56 L40,44 C38,36 30,32 28,26 Z" fill="#aeaeae"/><path d="M41,40 L48,42 L52,52 L46,56 Z" fill="#8a8a8a"/><path d="M30,16 L36,17 L35,22 L31,21 Z" fill="#5a5a5a"/><path d="M47,27 L53,27 L55,46 L50,40 Z" fill="#ececec"/></g></g></svg>
</header>
<aside>
<div style="left:0px;top:162px;width:459.5px;height:1600px;background:#1b1c2e"></div>
<span class="t" style="left:57.8px;top:189.4px;font-size:47.5px;line-height:57px;color:#ecae30;transform:scaleX(1.0431);transform-origin:0 0;-webkit-text-stroke:1.8px #ecae30;">cheddr</span>
<span class="t" style="left:214.4px;top:189.4px;font-size:47.5px;line-height:57px;color:#8c8d96;transform:scaleX(1.0913);transform-origin:0 0;-webkit-text-stroke:0.3px #8c8d96;">suite</span>
<svg style="left:332.8px;top:183px;" width="68.4" height="68.4" viewBox="332.8 183 68.4 68.4"><g fill="none" stroke="#ecb030" stroke-width="6" stroke-linejoin="miter" stroke-linecap="butt"><path d="M378.47,191.44 A28.2,28.2 0 0 0 350.03,239.72"/><path d="M351.85,240.98 A28.2,28.2 0 0 0 395.04,214.20 L371.00,214.20 L384.63,192.93"/></g></svg>
<span class="t" style="left:77.5px;top:276.1px;font-size:25px;line-height:30px;color:#fff;letter-spacing:0.79px;-webkit-text-stroke:0.95px #fff;">Welcome, Brian Whitaker</span>
<span class="t" style="left:172.6px;top:317.9px;font-size:25px;line-height:30px;color:#fff;letter-spacing:0.89px;-webkit-text-stroke:0.95px #fff;">PIN 5093</span>
<svg style="left:87.75px;top:400.65px;" width="37.5" height="37.5" viewBox="0 0 24 24"><g fill="none" stroke="#e6e6ee" stroke-width="1.75" stroke-linecap="round" stroke-linejoin="round"><rect x="3" y="3" width="18" height="18" rx="2" ry="2"/><line x1="3" y1="9" x2="21" y2="9"/><line x1="9" y1="21" x2="9" y2="9"/></g></svg>
<span class="t" style="left:139.8px;top:401.8px;font-size:30px;line-height:36px;color:#e9e9f0;letter-spacing:0.78px;-webkit-text-stroke:0.9px #e9e9f0;">Dashboard</span>
<svg style="left:87.75px;top:503.75px;" width="37.5" height="37.5" viewBox="0 0 24 24"><g fill="none" stroke="#e6e6ee" stroke-width="1.75" stroke-linecap="round" stroke-linejoin="round"><path d="M16 4h2a2 2 0 0 1 2 2v14a2 2 0 0 1-2 2H6a2 2 0 0 1-2-2V6a2 2 0 0 1 2-2h2"/><rect x="8" y="2" width="8" height="4" rx="1" ry="1"/></g></svg>
<span class="t" style="left:139.8px;top:504.9px;font-size:30px;line-height:36px;color:#e9e9f0;letter-spacing:1.85px;-webkit-text-stroke:0.9px #e9e9f0;">Log</span>
<svg style="left:87.75px;top:606.85px;" width="37.5" height="37.5" viewBox="0 0 24 24"><g fill="none" stroke="#e6e6ee" stroke-width="1.75" stroke-linecap="round" stroke-linejoin="round"><rect x="3" y="4" width="18" height="18" rx="2" ry="2"/><line x1="16" y1="2" x2="16" y2="6"/><line x1="8" y1="2" x2="8" y2="6"/><line x1="3" y1="10" x2="21" y2="10"/></g></svg>
<span class="t" style="left:141.1px;top:608.0px;font-size:30px;line-height:36px;color:#e9e9f0;letter-spacing:0.36px;-webkit-text-stroke:0.9px #e9e9f0;">Calendar</span>
<svg style="left:87.75px;top:709.95px;" width="37.5" height="37.5" viewBox="0 0 24 24"><g fill="none" stroke="#e6e6ee" stroke-width="1.75" stroke-linecap="round" stroke-linejoin="round"><circle cx="12" cy="12" r="10"/><polyline points="12 6 12 12 16 14"/></g></svg>
<span class="t" style="left:140.8px;top:711.1px;font-size:30px;line-height:36px;color:#e9e9f0;letter-spacing:0.51px;-webkit-text-stroke:0.9px #e9e9f0;">Schedule</span>
<svg style="left:87.75px;top:813.05px;" width="37.5" height="37.5" viewBox="0 0 24 24"><g fill="none" stroke="#e6e6ee" stroke-width="1.75" stroke-linecap="round" stroke-linejoin="round"><line x1="16.5" y1="9.4" x2="7.5" y2="4.21"/><path d="M21 16V8a2 2 0 0 0-1-1.73l-7-4a2 2 0 0 0-2 0l-7 4A2 2 0 0 0 3 8v8a2 2 0 0 0 1 1.73l7 4a2 2 0 0 0 2 0l7-4A2 2 0 0 0 21 16z"/><polyline points="3.27 6.96 12 12.01 20.73 6.96"/><line x1="12" y1="22.08" x2="12" y2="12"/></g></svg>
<span class="t" style="left:139.9px;top:814.2px;font-size:30px;line-height:36px;color:#e9e9f0;letter-spacing:0.51px;-webkit-text-stroke:0.9px #e9e9f0;">Inventory</span>
<svg style="left:87.75px;top:916.15px;" width="37.5" height="37.5" viewBox="0 0 24 24"><g fill="none" stroke="#e6e6ee" stroke-width="1.75" stroke-linecap="round" stroke-linejoin="round"><path d="M21 15a2 2 0 0 1-2 2H7l-4 4V5a2 2 0 0 1 2-2h14a2 2 0 0 1 2 2z"/></g></svg>
<span class="t" style="left:140.2px;top:917.3px;font-size:30px;line-height:36px;color:#e9e9f0;letter-spacing:0.36px;-webkit-text-stroke:0.9px #e9e9f0;">Messages</span>
<svg style="left:87.75px;top:1019.25px;" width="37.5" height="37.5" viewBox="0 0 24 24"><g fill="none" stroke="#e6e6ee" stroke-width="1.75" stroke-linecap="round" stroke-linejoin="round"><path d="M17 21v-2a4 4 0 0 0-4-4H5a4 4 0 0 0-4 4v2"/><circle cx="9" cy="7" r="4"/><path d="M23 21v-2a4 4 0 0 0-3-3.87"/><path d="M16 3.13a4 4 0 0 1 0 7.75"/></g></svg>
<span class="t" style="left:141.3px;top:1020.4px;font-size:30px;line-height:36px;color:#e9e9f0;letter-spacing:0.24px;-webkit-text-stroke:0.9px #e9e9f0;">Staff</span>
<svg style="left:87.75px;top:1122.35px;" width="37.5" height="37.5" viewBox="0 0 24 24"><g fill="none" stroke="#e6e6ee" stroke-width="1.75" stroke-linecap="round" stroke-linejoin="round"><path d="M14 2H6a2 2 0 0 0-2 2v16a2 2 0 0 0 2 2h12a2 2 0 0 0 2-2V8z"/><polyline points="14 2 14 8 20 8"/><line x1="16" y1="13" x2="8" y2="13"/><line x1="16" y1="17" x2="8" y2="17"/><polyline points="10 9 9 9 8 9"/></g></svg>
<span class="t" style="left:140.2px;top:1123.5px;font-size:30px;line-height:36px;color:#e9e9f0;letter-spacing:0.52px;-webkit-text-stroke:0.9px #e9e9f0;">Documents</span>
<svg style="left:87.75px;top:1225.45px;" width="37.5" height="37.5" viewBox="0 0 24 24"><g fill="none" stroke="#e6e6ee" stroke-width="1.75" stroke-linecap="round" stroke-linejoin="round"><rect x="1" y="3" width="15" height="13"/><polygon points="16 8 20 8 23 11 23 16 16 16 16 8"/><circle cx="5.5" cy="18.5" r="2.5"/><circle cx="18.5" cy="18.5" r="2.5"/></g></svg>
<span class="t" style="left:142.5px;top:1226.6px;font-size:30px;line-height:36px;color:#e9e9f0;letter-spacing:0.35px;-webkit-text-stroke:0.9px #e9e9f0;">Vendors</span>
<svg style="left:87.75px;top:1328.55px;" width="37.5" height="37.5" viewBox="0 0 24 24"><g fill="none" stroke="#e6e6ee" stroke-width="1.75" stroke-linecap="round" stroke-linejoin="round"><path d="M21.21 15.89A10 10 0 1 1 8 2.83"/><path d="M22 12A10 10 0 0 0 12 2v10z"/></g></svg>
<span class="t" style="left:140.2px;top:1329.7px;font-size:30px;line-height:36px;color:#e9e9f0;letter-spacing:0.19px;-webkit-text-stroke:0.9px #e9e9f0;">Reports</span>
<svg style="left:87.75px;top:1431.65px;" width="37.5" height="37.5" viewBox="0 0 24 24"><g fill="none" stroke="#e6e6ee" stroke-width="1.75" stroke-linecap="round" stroke-linejoin="round"><circle cx="12" cy="12" r="3"/><path d="M19.4 15a1.65 1.65 0 0 0 .33 1.82l.06.06a2 2 0 0 1 0 2.83 2 2 0 0 1-2.83 0l-.06-.06a1.65 1.65 0 0 0-1.82-.33 1.65 1.65 0 0 0-1 1.51V21a2 2 0 0 1-2 2 2 2 0 0 1-2-2v-.09A1.65 1.65 0 0 0 9 19.4a1.65 1.65 0 0 0-1.82.33l-.06.06a2 2 0 0 1-2.83 0 2 2 0 0 1 0-2.83l.06-.06a1.65 1.65 0 0 0 .33-1.82 1.65 1.65 0 0 0-1.51-1H3a2 2 0 0 1-2-2 2 2 0 0 1 2-2h.09A1.65 1.65 0 0 0 4.6 9a1.65 1.65 0 0 0-.33-1.82l-.06-.06a2 2 0 0 1 0-2.83 2 2 0 0 1 2.83 0l.06.06a1.65 1.65 0 0 0 1.82.33H9a1.65 1.65 0 0 0 1-1.51V3a2 2 0 0 1 2-2 2 2 0 0 1 2 2v.09a1.65 1.65 0 0 0 1 1.51 1.65 1.65 0 0 0 1.82-.33l.06-.06a2 2 0 0 1 2.83 0 2 2 0 0 1 0 2.83l-.06.06a1.65 1.65 0 0 0-.33 1.82V9a1.65 1.65 0 0 0 1.51 1H21a2 2 0 0 1 2 2 2 2 0 0 1-2 2h-.09a1.65 1.65 0 0 0-1.51 1z"/></g></svg>
<span class="t" style="left:141.3px;top:1432.8px;font-size:30px;line-height:36px;color:#e9e9f0;letter-spacing:0.26px;-webkit-text-stroke:0.9px #e9e9f0;">Settings</span>
<svg style="left:87.75px;top:1534.75px;" width="37.5" height="37.5" viewBox="0 0 24 24"><g fill="none" stroke="#e6e6ee" stroke-width="1.75" stroke-linecap="round" stroke-linejoin="round"><path d="M20 21v-2a4 4 0 0 0-4-4H8a4 4 0 0 0-4 4v2"/><circle cx="12" cy="7" r="4"/></g></svg>
<span class="t" style="left:140.8px;top:1535.9px;font-size:30px;line-height:36px;color:#e9e9f0;letter-spacing:0.47px;-webkit-text-stroke:0.9px #e9e9f0;">Profile</span>
<div style="left:2px;top:1504px;width:4px;height:104px;background:#fff"></div>
</aside>
<section>
<div style="left:0px;top:0px;width:2884px;height:86px;background:#202124"></div>
<div style="left:0px;top:86px;width:2884px;height:72px;background:#35363a"></div>
<div style="left:0px;top:158px;width:2884px;height:4px;background:#1f2023"></div>
<div style="left:156px;top:18px;width:480px;height:68px;background:#35363a;border-radius:14px 14px 0 0"></div>
<svg style="left:144px;top:74px;" width="12" height="12" viewBox="0 0 12 12"><path d="M12,0 V12 H0 A12,12 0 0 0 12,0 Z" fill="#35363a"/></svg>
<svg style="left:636px;top:74px;" width="12" height="12" viewBox="0 0 12 12"><path d="M0,0 V12 H12 A12,12 0 0 1 0,0 Z" fill="#35363a"/></svg>
<div style="left:26px;top:32px;width:24px;height:24px;background:#fe2a3c;border-radius:50%"></div>
<div style="left:66px;top:32px;width:24px;height:24px;background:#ffb800;border-radius:50%"></div>
<div style="left:106px;top:32px;width:24px;height:24px;background:#0fc73a;border-radius:50%"></div>
<svg style="left:178.2px;top:34.2px;" width="35.6" height="35.6" viewBox="178.2 34.2 35.6 35.6"><g fill="none" stroke="#f3b42b" stroke-width="3.2" stroke-linejoin="miter" stroke-linecap="butt"><path d="M201.94,38.66 A14.6,14.6 0 0 0 187.21,63.66"/><path d="M188.16,64.31 A14.6,14.6 0 0 0 210.52,50.45 L198.07,50.45 L205.15,39.41"/></g></svg>
<span class="t" style="left:229.7px;top:40.5px;font-size:26px;line-height:31px;color:#fff;letter-spacing:0.92px;">CheddrSuite</span>
<svg style="left:594px;top:42px;" width="20" height="20" viewBox="0 0 20 20"><path d="M3,3 L17,17 M17,3 L3,17" stroke="#fff" stroke-width="2.4" fill="none"/></svg>
<svg style="left:666px;top:38px;" width="28" height="28" viewBox="0 0 28 28"><path d="M14,0 V28 M0,14 H28" stroke="#d2d2d4" stroke-width="3.4" fill="none"/></svg>
<svg style="left:24px;top:104px;" width="38" height="36" viewBox="0 0 38 36"><path d="M18.8,7.4 L6.6,18 L18.8,28.6 M7.4,18 H31.4" stroke="#8b8c90" stroke-width="4.3" fill="none" stroke-linecap="round" stroke-linejoin="round"/></svg>
<svg style="left:90px;top:104px;" width="38" height="36" viewBox="0 0 38 36"><path d="M19.2,7.4 L31.4,18 L19.2,28.6 M30.6,18 H6.4" stroke="#8b8c90" stroke-width="4.3" fill="none" stroke-linecap="round" stroke-linejoin="round"/></svg>
<svg style="left:156px;top:104px;" width="34" height="36" viewBox="0 0 34 36"><path d="M27.4,22.6 A12,12 0 1 1 24.2,9.2" stroke="#fff" stroke-width="4.3" fill="none"/><path d="M29.9,2.2 V16.1 H16.5 Z" fill="#fff"/></svg>
<div style="left:218px;top:94px;width:2580px;height:56px;background:#202124;border-radius:28px"></div>
<svg style="left:244px;top:108px;" width="20" height="26" viewBox="0 0 20 26"><rect x="2" y="10" width="16" height="14" rx="2" fill="#e8e8e8"/><path d="M5.5,11 V7.5 a4.5,4.5 0 0 1 9,0 V11" stroke="#e8e8e8" stroke-width="2.6" fill="none"/></svg>
<span class="t" style="left:285.4px;top:107.9px;font-size:30px;line-height:36px;color:#fff;letter-spacing:1.70px;">app.cheddrsuite.com</span>
<div style="left:2833.8px;top:110.3px;width:6.4px;height:6.4px;background:#fff;border-radius:50%"></div>
<div style="left:2833.8px;top:120.1px;width:6.4px;height:6.4px;background:#fff;border-radius:50%"></div>
<div style="left:2833.8px;top:129.8px;width:6.4px;height:6.4px;background:#fff;border-radius:50%"></div>
</section>
</div><div id="hl"></div><div id="frame"></div></body></html>
